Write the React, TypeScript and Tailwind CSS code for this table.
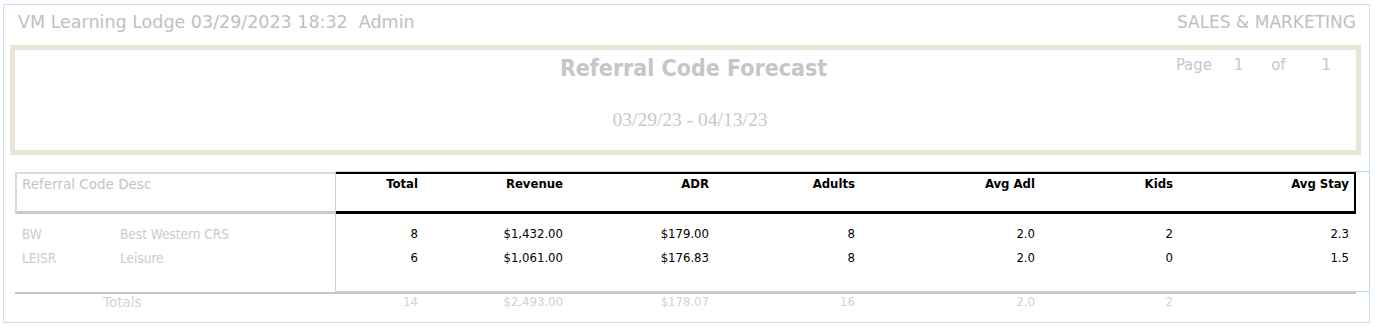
import React from "react";

const colW = ["w-[83px]", "w-[145px]", "w-[146px]", "w-[146px]", "w-[180px]", "w-[138px]", "w-[176px]"];

const headers = ["Total", "Revenue", "ADR", "Adults", "Avg Adl", "Kids", "Avg Stay"];

const rows = [
  { code: "BW", desc: "Best Western CRS", vals: ["8", "$1,432.00", "$179.00", "8", "2.0", "2", "2.3"] },
  { code: "LEISR", desc: "Leisure", vals: ["6", "$1,061.00", "$176.83", "8", "2.0", "0", "1.5"] },
];

const totals = ["14", "$2,493.00", "$178.07", "16", "2.0", "2", ""];

const COND = "font-['DejaVu_Sans_Condensed','DejaVu_Sans',sans-serif]";
const REG = "font-['DejaVu_Sans',sans-serif]";

function Cells({ vals, className }: { vals: string[]; className?: string }) {
  return (
    <>
      {vals.map((v, i) => (
        <div key={i} className={`${colW[i]} shrink-0 text-right ${className ?? ""}`}>
          {v}
        </div>
      ))}
    </>
  );
}

export default function App() {
  return (
    <div className={`w-[1375px] h-[327px] bg-white pl-[3px] pt-[4px] ${COND}`}>
      <div className="w-[1367px] h-[319px] border border-[#c8def2]">
        {/* Top bar */}
        <div className={`flex justify-between h-[40px] pt-[7px] pl-[14px] pr-[13px] leading-[20px] text-[#c0c0c0] ${REG}`}>
          <span className="whitespace-pre text-[17.5px]">VM Learning Lodge 03/29/2023 18:32  Admin</span>
          <span className="text-[17px]">SALES &amp; MARKETING</span>
        </div>

        {/* Title box */}
        <div className="ml-[6px] w-[1351px] h-[110px] border-[5px] border-[#e8e6d6]">
          <div className="grid grid-cols-[1fr_auto_1fr] pt-[4px]">
            <div />
            <div className="pl-[16px] text-[23px] leading-[28px] font-bold text-[#c6c6c6]">
              Referral Code Forecast
            </div>
            <div className="flex justify-end pr-[25px] pt-[1px] text-[16.5px] leading-[20px] text-[#c6c6c6]">
              <span>Page</span>
              <span className="ml-[22px]">1</span>
              <span className="ml-[28px]">of</span>
              <span className="ml-[36px]">1</span>
            </div>
          </div>
          <div className="mt-[26px] pl-[9px] text-center font-['Liberation_Serif',serif] text-[19.5px] leading-[24px] text-[#c8c8c8]">
            03/29/23 - 04/13/23
          </div>
        </div>

        {/* Table */}
        <div className="relative ml-[11px] mt-[17px] w-[1341px]">
          <div className="flex">
            <div className={`w-[320px] h-[42px] border-l-2 border-t-2 border-[#dadada] border-b-[3px] border-b-[#c9c9c9] pl-[5px] pt-[2px] text-[13.5px] leading-[16px] text-[#c4c4c4] ${REG}`}>
              Referral Code Desc
            </div>
            <div className="flex w-[1021px] h-[42px] border-t-2 border-r-2 border-b-[3px] border-black pr-[5px] pt-[2px] text-[13px] leading-[16px] font-bold text-black">
              <Cells vals={headers} />
            </div>
          </div>

          <div className="pt-[8px]">
            {rows.map((r) => (
              <div key={r.code} className="flex h-[24px] text-[13px] leading-[24px]">
                <div className="flex w-[320px] shrink-0 text-[13.5px] text-[#cbcbcb]">
                  <span className="w-[105px] pl-[7px]">{r.code}</span>
                  <span>{r.desc}</span>
                </div>
                <Cells vals={r.vals} className="text-black" />
              </div>
            ))}
          </div>

          <div className="mt-[22px] h-[2px] bg-[#c6c6c6]" />

          <div className="flex h-[16px] text-[13px] leading-[16px] text-[#d2d2d2]">
            <div className={`w-[320px] shrink-0 pl-[88px] text-[13.5px] ${REG}`}>Totals</div>
            <Cells vals={totals} />
          </div>

          {/* selection outline */}
          <div className="absolute left-[320px] top-[-1px] w-[1035px] h-[121px] border border-[#bcd6ee] pointer-events-none" />
        </div>
      </div>
    </div>
  );
}
